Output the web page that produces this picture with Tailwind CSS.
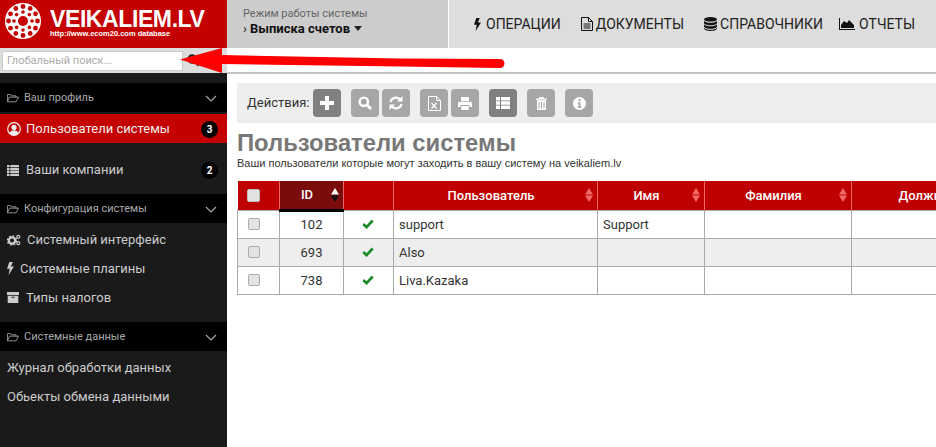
<!DOCTYPE html>
<html lang="ru">
<head>
<meta charset="utf-8">
<script src="https://cdn.jsdelivr.net/npm/@tailwindcss/browser@4"></script>
</head>
<body class="w-[936px] h-[447px] overflow-hidden bg-white font-['Roboto',sans-serif] text-[#333]">
<div class="relative grid grid-cols-[227px_709px] h-[447px] overflow-hidden">
  <!-- SIDEBAR -->
  <aside class="flex flex-col h-[447px] bg-[#1a1a1a]">
    <div class="flex items-start h-[48px] bg-[#c40000] pl-[5px] pt-[3px] gap-[1px]">
      <svg width="36" height="36" viewBox="0 0 36 36" class="shrink-0 mr-[1px]">
        <circle cx="18" cy="18" r="18" fill="#fff"/>
        <g fill="#c40000">
          <circle cx="18" cy="18" r="5"/>
          <circle cx="18" cy="9" r="1.8"/><circle cx="24.4" cy="11.6" r="1.8"/><circle cx="27" cy="18" r="1.8"/><circle cx="24.4" cy="24.4" r="1.8"/><circle cx="18" cy="27" r="1.8"/><circle cx="11.6" cy="24.4" r="1.8"/><circle cx="9" cy="18" r="1.8"/><circle cx="11.6" cy="11.6" r="1.8"/>
          <circle cx="18" cy="3.5" r="2.4"/><circle cx="25.2" cy="5.5" r="2.4"/><circle cx="30.5" cy="10.8" r="2.4"/><circle cx="32.5" cy="18" r="2.4"/><circle cx="30.5" cy="25.2" r="2.4"/><circle cx="25.2" cy="30.5" r="2.4"/><circle cx="18" cy="32.5" r="2.4"/><circle cx="10.8" cy="30.5" r="2.4"/><circle cx="5.5" cy="25.2" r="2.4"/><circle cx="3.5" cy="18" r="2.4"/><circle cx="5.5" cy="10.8" r="2.4"/><circle cx="10.8" cy="5.5" r="2.4"/>
        </g>
      </svg>
      <div class="flex flex-col pl-[7px]">
        <span class="font-['Liberation_Sans',sans-serif] font-bold text-white text-[23px] tracking-[-0.4px] leading-[22px] mt-[5px] whitespace-nowrap">VEIKALIEM.LV</span>
        <span class="font-['Liberation_Sans',sans-serif] font-bold text-white text-[7.5px] leading-[8px] whitespace-nowrap">http://www.ecom20.com database</span>
      </div>
    </div>
    <div class="flex items-center h-[25px] bg-[#ddd] pl-[2px]">
      <input type="text" placeholder="Глобальный поиск..." class="w-[181px] h-[20px] bg-white border border-[#ccc] px-[4px] text-[11px] placeholder:text-[#aaa] outline-none">
      <svg width="13" height="13" viewBox="0 0 14 14" class="ml-[4px]"><circle cx="5.5" cy="5.5" r="4" fill="none" stroke="#222" stroke-width="2.2"/><path d="M8.5 8.5l4 4" stroke="#222" stroke-width="2.4"/></svg>
    </div>
    <div class="h-[10px]"></div>
    <div class="flex items-center justify-between h-[29px] pt-[1px] bg-black pl-[7px] pr-[10px] text-[#a9a9a9] text-[11px]">
      <span class="flex items-center gap-[5px]">
        <svg width="12" height="10" viewBox="0 0 14 11" fill="none" stroke="#a9a9a9" stroke-width="1"><path d="M.5 9.5V1.500h4l1 1.500h5v2M.5 9.500l2.500-5h10.500l-3 5.500H.5z"/></svg>
        Ваш профиль
      </span>
      <svg width="12" height="7" viewBox="0 0 12 7" fill="none" stroke="#a9a9a9" stroke-width="1.2"><path d="M1 1l5 5 5-5"/></svg>
    </div>
    <div class="flex items-center justify-between h-[29px] mt-[2px] pt-[1px] bg-[#c40000] pl-[7px] pr-[9px] text-[#eee] text-[13px]">
      <span class="flex items-center gap-[5px]">
        <svg width="14" height="14" viewBox="0 0 14 14"><circle cx="7" cy="7" r="6.3" fill="none" stroke="#eee" stroke-width="1.2"/><circle cx="7" cy="5.4" r="2.6" fill="#eee"/><path d="M2.6 11.2c.6-2.2 2.3-3 4.4-3s3.800.8 4.400 3c-1.200 1.300-2.700 2-4.400 2s-3.200-.7-4.400-2z" fill="#eee"/></svg>
        Пользователи системы
      </span>
      <span class="flex items-center justify-center size-[17px] rounded-full bg-black text-white text-[10px] font-bold">3</span>
    </div>
    <div class="flex items-center justify-between h-[51px] pt-[3px] pl-[7px] pr-[9px] text-[#ccc] text-[13px]">
      <span class="flex items-center gap-[7px]">
        <svg width="12" height="11" viewBox="0 0 12 11" fill="#ccc"><path d="M0 0h2.500v2.300H0zM3.300 0H12v2.300H3.300zM0 2.900h2.500v2.300H0zM3.300 2.900H12v2.300H3.300zM0 5.800h2.500v2.300H0zM3.300 5.800H12v2.300H3.300zM0 8.700h2.500V11H0zM3.300 8.700H12V11H3.300z"/></svg>
        Ваши компании
      </span>
      <span class="flex items-center justify-center size-[17px] rounded-full bg-black text-white text-[10px] font-bold">2</span>
    </div>
    <div class="flex items-center justify-between h-[29px] pt-[1px] bg-black pl-[7px] pr-[10px] text-[#a9a9a9] text-[11px]">
      <span class="flex items-center gap-[5px]">
        <svg width="12" height="10" viewBox="0 0 14 11" fill="none" stroke="#a9a9a9" stroke-width="1"><path d="M.5 9.500V1.500h4l1 1.500h5v2M.5 9.500l2.500-5h10.500l-3 5.500H.5z"/></svg>
        Конфигурация системы
      </span>
      <svg width="12" height="7" viewBox="0 0 12 7" fill="none" stroke="#a9a9a9" stroke-width="1.2"><path d="M1 1l5 5 5-5"/></svg>
    </div>
    <div class="flex items-center h-[29px] mt-[2px] pl-[7px] gap-[6px] text-[#ccc] text-[13px]">
      <svg width="14" height="12" viewBox="0 0 14 12"><circle cx="5" cy="6.500" r="3.200" fill="none" stroke="#ccc" stroke-width="2.200"/><circle cx="5" cy="6.500" r="4.600" fill="none" stroke="#ccc" stroke-width="1.400" stroke-dasharray="1.800 1.800"/><circle cx="11.300" cy="2.800" r="1.500" fill="none" stroke="#ccc" stroke-width="1.200"/><circle cx="11.300" cy="9.200" r="1.500" fill="none" stroke="#ccc" stroke-width="1.200"/></svg>
      Системный интерфейс
    </div>
    <div class="flex items-center h-[29px] pl-[7px] gap-[6px] text-[#ccc] text-[13px]">
      <svg width="7" height="13" viewBox="0 0 7 13" fill="#ccc"><path d="M2.300 0h3.500L3.900 4.600H7L1.600 13l1.100-6.300H0z"/></svg>
      Системные плагины
    </div>
    <div class="flex items-center h-[29px] pl-[7px] gap-[7px] text-[#ccc] text-[13px]">
      <svg width="12" height="11" viewBox="0 0 12 11" fill="#ccc"><path d="M0 0h12v3H0zM.7 3.700h10.600V11H.7z"/><path d="M4.500 5.200h3" stroke="#1a1a1a"/></svg>
      Типы налогов
    </div>
    <div class="flex items-center justify-between h-[29px] pt-[1px] mt-[10px] bg-black pl-[7px] pr-[10px] text-[#a9a9a9] text-[11px]">
      <span class="flex items-center gap-[5px]">
        <svg width="12" height="10" viewBox="0 0 14 11" fill="none" stroke="#a9a9a9" stroke-width="1"><path d="M.5 9.500V1.500h4l1 1.500h5v2M.5 9.500l2.500-5h10.500l-3 5.500H.5z"/></svg>
        Системные данные
      </span>
      <svg width="12" height="7" viewBox="0 0 12 7" fill="none" stroke="#a9a9a9" stroke-width="1.2"><path d="M1 1l5 5 5-5"/></svg>
    </div>
    <div class="flex items-center h-[29px] mt-[2px] pl-[7px] text-[#ccc] text-[13px]">Журнал обработки данных</div>
    <div class="flex items-center h-[29px] pl-[7px] text-[#ccc] text-[13px]">Обьекты обмена данными</div>
  </aside>

  <!-- MAIN -->
  <main class="flex flex-col min-w-0 overflow-hidden">
    <header class="flex h-[48px] bg-[#ddd]">
      <div class="w-[222px] shrink-0 bg-[#ccc] border-r border-white pl-[16px] pt-[7px]">
        <div class="text-[11px] leading-[14px] text-[#666]">Режим работы системы</div>
        <div class="flex items-center gap-[3px] text-[13px] leading-[15px] text-[#111] font-bold">
          <span class="font-normal">›</span>Выписка счетов
          <svg width="8" height="5" viewBox="0 0 8 5" class="ml-[1px]"><path d="M0 0h8L4 5z" fill="#222"/></svg>
        </div>
      </div>
      <nav class="flex items-center pl-[25px] text-[14px] text-[#222] whitespace-nowrap">
        <svg width="7" height="13" viewBox="0 0 7 13" fill="#111" class="mr-[5px]"><path d="M2.300 0h3.500L3.900 4.600H7L1.600 13l1.100-6.300H0z"/></svg>
        <span class="mr-[20px]">ОПЕРАЦИИ</span>
        <svg width="12" height="14" viewBox="0 0 12 14" fill="none" stroke="#111" class="mr-[3px]"><path d="M.5.500h7l4 4v9H.500zM7.500.500v4h4M2.500 7h7M2.500 9h7M2.500 11h7"/></svg>
        <span class="mr-[20px]">ДОКУМЕНТЫ</span>
        <svg width="13" height="14" viewBox="0 0 13 14" fill="#111" class="mr-[3px]"><ellipse cx="6.500" cy="2.300" rx="6.500" ry="2.300"/><path d="M0 3.800c1 1.500 3.500 2 6.500 2s5.500-.5 6.500-2v2.500c-1 1.500-3.500 2-6.500 2S1 7.800 0 6.300zM0 7.300c1 1.500 3.500 2 6.500 2s5.500-.5 6.500-2v2.500c-1 1.500-3.500 2-6.500 2S1 11.300 0 9.800zM0 10.800c1 1.500 3.500 2 6.500 2s5.500-.5 6.500-2v1c-1 1.500-3.500 2.200-6.500 2.200S1 13.300 0 11.800z"/></svg>
        <span class="mr-[16px]">СПРАВОЧНИКИ</span>
        <svg width="16" height="12" viewBox="0 0 16 12" fill="#111" class="mr-[4px]"><path d="M0 0h1v11h15v1H0zM2 10V7l3-4 3 2 2-3 2 2 3 3v3z"/></svg>
        <span>ОТЧЕТЫ</span>
      </nav>
    </header>
    <div class="h-[26px] bg-white border-b-[2px] border-[#c4c4c4]"></div>
    <div class="flex flex-col pl-[10px] pt-[9px]">
      <div class="flex items-center h-[40px] bg-[#eee] pl-[10px] text-[13px] text-[#333]">
        <span class="w-[66px]">Действия:</span>
        <button class="flex items-center justify-center size-[28px] rounded-[4px] bg-[#808080]"><svg width="14" height="14" viewBox="0 0 14 14" fill="#fff"><path d="M5 0h4v5h5v4H9v5H5V9H0V5h5z"/></svg></button>
        <button class="flex items-center justify-center size-[28px] rounded-[4px] bg-[#a6a6a6] ml-[10px]"><svg width="14" height="14" viewBox="0 0 14 14"><circle cx="5.800" cy="5.800" r="4.200" fill="none" stroke="#fff" stroke-width="2.400"/><path d="M9 9l4 4" stroke="#fff" stroke-width="2.800"/></svg></button>
        <button class="flex items-center justify-center size-[28px] rounded-[4px] bg-[#a6a6a6] ml-[3px]"><svg width="14" height="14" viewBox="0 0 14 14" fill="none" stroke="#fff" stroke-width="2.200"><path d="M1.500 6A5.500 5.500 0 0 1 11 3.500M12.500 8A5.500 5.500 0 0 1 3 10.500"/><path d="M13.500 0v5.500H8zM.5 14V8.500H6z" fill="#fff" stroke="none"/></svg></button>
        <button class="flex items-center justify-center size-[28px] rounded-[4px] bg-[#a6a6a6] ml-[10px]"><svg width="13" height="15" viewBox="0 0 13 15" fill="none" stroke="#fff"><path d="M.5.500h8l4 4v10H.500zM8.500.500v4h4"/><path d="M3.500 7l5 5.500M8.500 7l-5 5.500" stroke-width="1.300"/></svg></button>
        <button class="flex items-center justify-center size-[28px] rounded-[4px] bg-[#a6a6a6] ml-[3px]"><svg width="14" height="13" viewBox="0 0 14 13" fill="#fff"><path d="M3 0h8v4H3zM1.500 4.800h11c.8 0 1.500.7 1.500 1.500V10h-2.500V8h-9v2H0V6.300c0-.8.700-1.500 1.500-1.500zM3.300 9h7.400v4H3.300z"/></svg></button>
        <button class="flex items-center justify-center size-[28px] rounded-[4px] bg-[#808080] ml-[10px]"><svg width="14" height="12" viewBox="0 0 14 12" fill="#fff"><path d="M0 0h4v3.400H0zM5 0h9v3.400H5zM0 4.300h4v3.400H0zM5 4.300h9v3.400H5zM0 8.600h4V12H0zM5 8.600h9V12H5z"/></svg></button>
        <button class="flex items-center justify-center size-[28px] rounded-[4px] bg-[#a6a6a6] ml-[10px]"><svg width="11" height="13" viewBox="0 0 11 13" fill="#fff"><path d="M3.500 0h4l.7 1.500H11v1.200H0V1.500h2.800zM1 3.300h9V13H1z"/><path d="M3 5v6.500M5.500 5v6.500M8 5v6.500" stroke="#a6a6a6"/></svg></button>
        <button class="flex items-center justify-center size-[28px] rounded-[4px] bg-[#a6a6a6] ml-[10px]"><svg width="13" height="13" viewBox="0 0 13 13"><circle cx="6.500" cy="6.500" r="6.500" fill="#fff"/><path d="M5.500 2h2v2h-2zM4.800 5.200h2.700v4.300h.8v1.500H4.800V9.500h.8V6.700h-.8z" fill="#a6a6a6"/></svg></button>
      </div>
      <h1 class="mt-[6px] text-[23.8px] leading-[28px] font-bold text-[#777] whitespace-nowrap font-['Liberation_Sans',sans-serif]">Пользователи системы</h1>
      <p class="text-[11px] leading-[13px] text-[#333] font-['Liberation_Sans',sans-serif]">Ваши пользователи которые могут заходить в вашу систему на veikaliem.lv</p>
      <table class="mt-[11px] w-[787px] table-fixed border-collapse text-[13px] text-[#333]">
        <colgroup>
          <col class="w-[42px]"><col class="w-[64px]"><col class="w-[50px]"><col class="w-[204px]"><col class="w-[107px]"><col class="w-[147px]"><col class="w-[173px]">
        </colgroup>
        <thead>
          <tr class="h-[29px] bg-[#bf0000] text-white text-[13px] font-medium">
            <th class="border-r border-[#e66] pr-[10px]"><input type="checkbox" class="appearance-none block mx-auto size-[13px] rounded-[2px] bg-[#e2e2e2] border border-[#bbb]"></th>
            <th class="bg-[#7a0c0c] border-b-[3px] border-black border-r border-r-[#e66] relative font-medium pr-[9px]">ID
              <svg width="8" height="14" viewBox="0 0 8 14" class="absolute right-[4px] top-[7px]"><path d="M4 0l4 6.500H0z" fill="#fff"/><path d="M4 14L0 7.500h8z" fill="#111"/></svg>
            </th>
            <th class="border-r border-[#e66]"></th>
            <th class="border-r border-[#e66] relative font-medium pr-[9px]">Пользователь
              <svg width="8" height="14" viewBox="0 0 8 14" class="absolute right-[4px] top-[7px]"><path d="M4 0l4 6.500H0zM4 14L0 7.500h8z" fill="#f26a6a"/></svg>
            </th>
            <th class="border-r border-[#e66] relative font-medium pr-[9px]">Имя
              <svg width="8" height="14" viewBox="0 0 8 14" class="absolute right-[4px] top-[7px]"><path d="M4 0l4 6.500H0zM4 14L0 7.500h8z" fill="#f26a6a"/></svg>
            </th>
            <th class="border-r border-[#e66] relative font-medium pr-[9px]">Фамилия
              <svg width="8" height="14" viewBox="0 0 8 14" class="absolute right-[4px] top-[7px]"><path d="M4 0l4 6.500H0zM4 14L0 7.500h8z" fill="#f26a6a"/></svg>
            </th>
            <th class="font-medium pr-[9px]">Должность</th>
          </tr>
        </thead>
        <tbody>
          <tr class="h-[28px] bg-white">
            <td class="border border-[#aaa] pr-[10px]"><input type="checkbox" class="appearance-none block mx-auto size-[12px] rounded-[2px] bg-[#e2e2e2] border border-[#aaa]"></td>
            <td class="border border-[#aaa] text-center pt-[1px]">102</td>
            <td class="border border-[#aaa] pr-[2px]"><svg width="12" height="10" viewBox="0 0 12 10" class="block mx-auto"><path d="M1.300 5l3.200 3.200L10.700 1.500" fill="none" stroke="#1a8a2a" stroke-width="2.600"/></svg></td>
            <td class="border border-[#aaa] px-[5px] pt-[1px]">support</td>
            <td class="border border-[#aaa] px-[5px] pt-[1px]">Support</td>
            <td class="border border-[#aaa]"></td>
            <td class="border border-[#aaa]"></td>
          </tr>
          <tr class="h-[28px] bg-[#eee]">
            <td class="border border-[#aaa] pr-[10px]"><input type="checkbox" class="appearance-none block mx-auto size-[12px] rounded-[2px] bg-[#e2e2e2] border border-[#aaa]"></td>
            <td class="border border-[#aaa] text-center pt-[1px]">693</td>
            <td class="border border-[#aaa] pr-[2px]"><svg width="12" height="10" viewBox="0 0 12 10" class="block mx-auto"><path d="M1.300 5l3.200 3.200L10.700 1.500" fill="none" stroke="#1a8a2a" stroke-width="2.600"/></svg></td>
            <td class="border border-[#aaa] px-[5px] pt-[1px]">Also</td>
            <td class="border border-[#aaa]"></td>
            <td class="border border-[#aaa]"></td>
            <td class="border border-[#aaa]"></td>
          </tr>
          <tr class="h-[28px] bg-white">
            <td class="border border-[#aaa] pr-[10px]"><input type="checkbox" class="appearance-none block mx-auto size-[12px] rounded-[2px] bg-[#e2e2e2] border border-[#aaa]"></td>
            <td class="border border-[#aaa] text-center pt-[1px]">738</td>
            <td class="border border-[#aaa] pr-[2px]"><svg width="12" height="10" viewBox="0 0 12 10" class="block mx-auto"><path d="M1.300 5l3.200 3.200L10.700 1.500" fill="none" stroke="#1a8a2a" stroke-width="2.600"/></svg></td>
            <td class="border border-[#aaa] px-[5px] pt-[1px]">Liva.Kazaka</td>
            <td class="border border-[#aaa]"></td>
            <td class="border border-[#aaa]"></td>
            <td class="border border-[#aaa]"></td>
          </tr>
        </tbody>
      </table>
    </div>
  </main>

  <!-- Red annotation arrow drawn over the page -->
  <svg width="936" height="447" viewBox="0 0 936 447" class="absolute inset-0 pointer-events-none">
    <path d="M180 59.500L222 48V55L400 58.500L500 59A4.500 4.500 0 0 1 500 68L400 66.500L222 64V73z" fill="#f00"/>
  </svg>
</div>
</body>
</html>
